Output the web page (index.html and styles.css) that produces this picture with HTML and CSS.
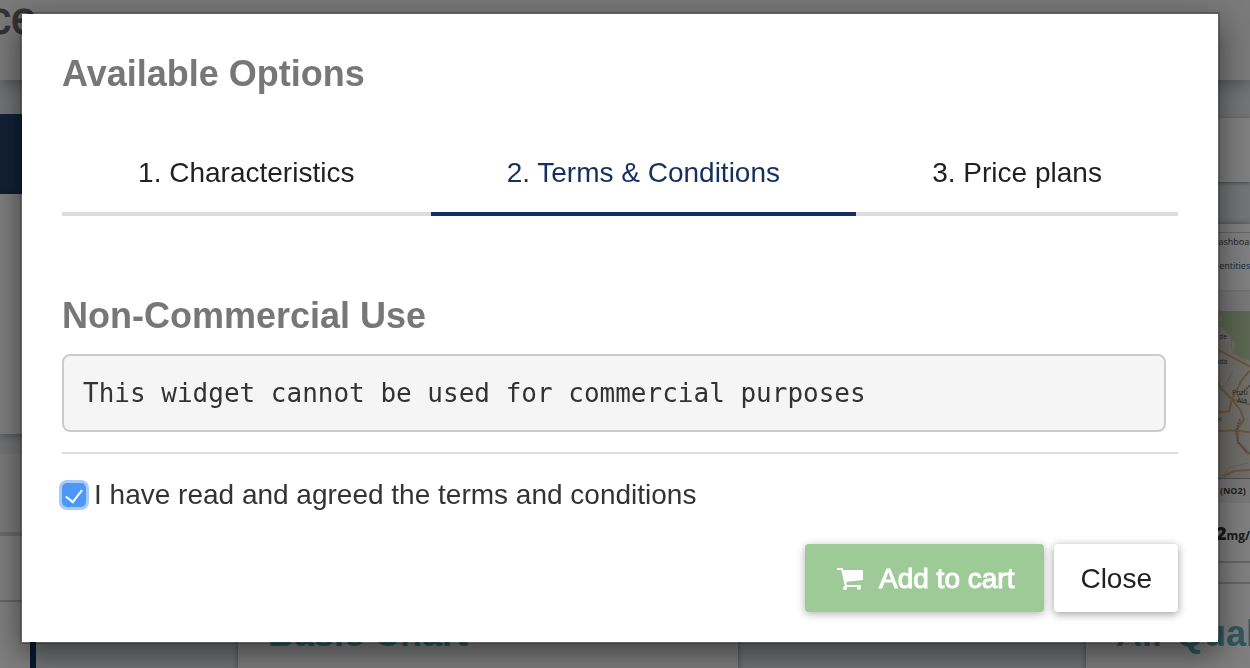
FILE: index.html
```
<!DOCTYPE html>
<html lang="en">
<head>
	<meta charset="UTF-8">
	<title>Available Options</title>
	<link rel="stylesheet" href="styles.css">
</head>
<body>
	<div class="page">
		<header class="topbar"><span class="brand">ce</span></header>
		<div class="columns">
			<aside class="sidebar">
				<div class="side-head"></div>
				<div class="side-filter"></div>
				<div class="side-list">
					<div class="side-title"></div>
					<div class="side-item"></div>
					<div class="side-item current"></div>
				</div>
			</aside>
			<main class="catalogue">
				<div class="search"></div>
				<div class="cards">
					<article class="card">
						<div class="thumb"></div>
						<h3 class="card-title">Basic Chart</h3>
					</article>
					<article class="card">
						<div class="thumb">
							<div class="thumb-head">
								<p>Dashboar</p>
								<p class="entities">T entities</p>
							</div>
							<svg class="map" width="38" height="168" viewBox="-4 0 38 168">
								<rect x="-4" width="38" height="168" fill="#dedad2"/>
								<path d="M3 0H34V50L17 43L19 33L14 25L8 17L3 15L6 8Z" fill="#b7cda2"/>
								<path d="M0 8L8 18L15 26L16 40L30 51M0 80L10 74L17 60M5 168L14 157L32 153" fill="none" stroke="#c6c1b7"/>
								<path d="M0 38L13 45L34 56M0 70L7 80L16 89L34 94M34 60L26 69L16 89L24 99L28 109L22 118V132L34 144M0 121L18 120L34 122M0 102L13 101L16 89M8 166L18 161L34 160" fill="none" stroke="#d6a876" stroke-width="2"/>
								<path d="M34 75L22 86M24 109L20 121L22 132L32 144" fill="none" stroke="#9b9286" stroke-width="2" stroke-dasharray="2 1"/>
								<g class="places">
									<text x="3" y="28">de</text>
									<text x="-1" y="53">nda</text>
									<text x="16" y="84">Pozu</text>
									<text x="21" y="93">Ala</text>
									<text x="0" y="112">el</text>
								</g>
							</svg>
							<p class="gas">(NO2)</p>
							<p class="reading"><b>2</b>mg/</p>
						</div>
						<h3 class="card-title">Air Qual</h3>
					</article>
				</div>
			</main>
		</div>
	</div>

	<div class="backdrop">
		<div class="modal" role="dialog" aria-modal="true" aria-labelledby="modal-title">
			<h2 class="heading" id="modal-title">Available Options</h2>
			<nav class="steps">
				<a href="#characteristics">1. Characteristics</a>
				<a href="#terms" class="active">2. Terms &amp; Conditions</a>
				<a href="#plans">3. Price plans</a>
			</nav>
			<section id="terms">
				<h2 class="heading">Non-Commercial Use</h2>
				<pre class="terms-text">This widget cannot be used for commercial purposes</pre>
			</section>
			<div class="agree">
				<input type="checkbox" id="agree" checked>
				<label for="agree">I have read and agreed the terms and conditions</label>
			</div>
			<div class="actions">
				<button type="button" class="btn btn-cart">
					<svg class="cart" width="26" height="24" viewBox="0 0 26 24">
						<path d="M0 2H5L9 19H24" fill="none" stroke="#fff" stroke-width="2"/>
						<path d="M6 3H26V13L8 15Z" fill="#fff"/>
						<circle cx="8" cy="21" r="2" fill="#fff"/>
						<circle cx="22" cy="21" r="2" fill="#fff"/>
					</svg>
					Add to cart
				</button>
				<button type="button" class="btn">Close</button>
			</div>
		</div>
	</div>
</body>
</html>
```

FILE: styles.css
```
*{
	box-sizing: border-box;
}
body{
	margin: 0;
	overflow: hidden;
	font-family: "Liberation Sans", Arial, sans-serif;
	font-size: 28px;
	line-height: 32px;
	color: #333;
}
h2,h3,p,pre{
	margin: 0;
}

/* page behind the dialog */
.page{
	height: 100vh;
	overflow: hidden;
	background: #e7eaec;
}
.topbar{
	height: 80px;
	overflow: hidden;
	background: #f5f5f5;
	box-shadow: 0 4px 16px rgba(0,0,0,0.3);
}
.brand{
	display: block;
	margin-left: -12px;
	font-size: 46px;
	line-height: 36px;
	color: #666;
	-webkit-text-stroke: 1px #666;
}
.columns{
	display: flex;
}
.sidebar{
	width: 36px;
	margin-top: 34px;
}
.side-head{
	height: 80px;
	background: #24406e;
}
.side-filter{
	height: 240px;
	background: #fff;
	box-shadow: 0 2px 8px rgba(0,0,0,0.3);
}
.side-list{
	margin-top: 20px;
	background: #fff;
}
.side-title{
	height: 82px;
	background: #f5f5f5;
	border-bottom: 4px solid #d5d5d5;
}
.side-item{
	height: 66px;
	border-bottom: 2px solid #ccc;
}
.side-item.current{
	height: 80px;
	border-right: 6px solid #12305f;
}
.catalogue{
	flex: 1;
	min-width: 0;
	padding: 38px 0 0 202px;
}
.search{
	height: 64px;
	margin-bottom: 42px;
	background: #fff;
	box-shadow: 0 1px 4px rgba(0,0,0,0.4);
}
.cards{
	display: grid;
	grid-template-columns: 500px 1fr;
	gap: 348px;
}
.card{
	min-width: 0;
	height: 600px;
	overflow: hidden;
	background: #fff;
	box-shadow: 0 0 6px rgba(0,0,0,0.4);
}
.thumb{
	height: 360px;
	padding: 8px 0 0 126px;
	border-bottom: 2px solid #ccc;
	font-family: "Open Sans", sans-serif;
	font-size: 9px;
	line-height: 18px;
	white-space: nowrap;
	color: #444;
}
.thumb-head{
	height: 79px;
	border-top: 1px solid #ccc;
	background: linear-gradient(#fff 57px, #e0e0e0 57px, #f0f0f0 60px);
}
.entities{
	margin-top: 6px;
	color: #2d4a70;
}
.map{
	display: block;
	border-bottom: 1px solid #999;
}
.places{
	font-size: 7px;
	fill: #444;
}
.gas{
	padding-left: 8px;
	background: #f0f0f0;
	font-weight: bold;
	line-height: 24px;
}
.reading{
	height: 60px;
	border-bottom: 2px solid #ccc;
	font-size: 12px;
	font-weight: bold;
	line-height: 60px;
	color: #333;
}
.reading b{
	padding-left: 4px;
	font-size: 18px;
}
.card-title{
	margin: 30px 0 0 30px;
	font-size: 36px;
	line-height: 40px;
	white-space: nowrap;
	color: #60b0c0;
}

/* dialog */
.backdrop{
	position: fixed;
	inset: 0;
	padding: 12px 30px 0 20px;
	background: rgba(0,0,0,0.5);
}
.modal{
	padding: 40px 40px 30px;
	border: 2px solid rgba(0,0,0,0.2);
	background: #fff;
	background-clip: padding-box;
	box-shadow: 0 10px 30px rgba(0,0,0,0.5);
}
.heading{
	font-size: 36px;
	line-height: 40px;
	color: #777;
}
.steps{
	display: flex;
	margin: 38px 0 80px;
}
.steps a{
	flex: 1 1 auto;
	padding-top: 2px;
	border-bottom: 4px solid #ddd;
	line-height: 78px;
	text-align: center;
	text-decoration: none;
	color: #212121;
}
.steps a.active{
	border-color: #152f5f;
	color: #152f5f;
}
.terms-text{
	margin: 18px 12px 20px 0;
	padding: 19px;
	border: 2px solid #ccc;
	border-radius: 8px;
	background: #f5f5f5;
	font-family: "DejaVu Sans Mono", monospace;
	font-size: 26px;
	line-height: 36px;
	white-space: pre-wrap;
}
.agree{
	display: flex;
	align-items: center;
	gap: 8px;
	padding-top: 25px;
	border-top: 2px solid #ddd;
}
.agree input{
	appearance: none;
	display: grid;
	place-items: center;
	width: 24px;
	height: 24px;
	margin: 0;
	border-radius: 5px;
	background: #4d97f7;
	box-shadow: 0 0 0 3px #a9cbf8;
}
.agree input:checked::after{
	content: "";
	width: 8px;
	height: 14px;
	margin-bottom: 2px;
	border: solid #fff;
	border-width: 0 2px 2px 0;
	transform: rotate(38deg);
}
.actions{
	display: flex;
	justify-content: flex-end;
	gap: 10px;
	margin-top: 33px;
}
.btn{
	padding: 19px 26px 17px;
	border: 0;
	border-radius: 4px;
	background: #fff;
	box-shadow: 0 2px 8px rgba(0,0,0,0.4);
	font: inherit;
	color: #212121;
}
.btn-cart{
	display: flex;
	align-items: center;
	gap: 16px;
	padding-right: 30px;
	padding-left: 32px;
	background: #9dca96;
	box-shadow: 0 2px 8px rgba(0,0,0,0.3);
	color: #fff;
	-webkit-text-stroke: 1px #fff;
}
```
